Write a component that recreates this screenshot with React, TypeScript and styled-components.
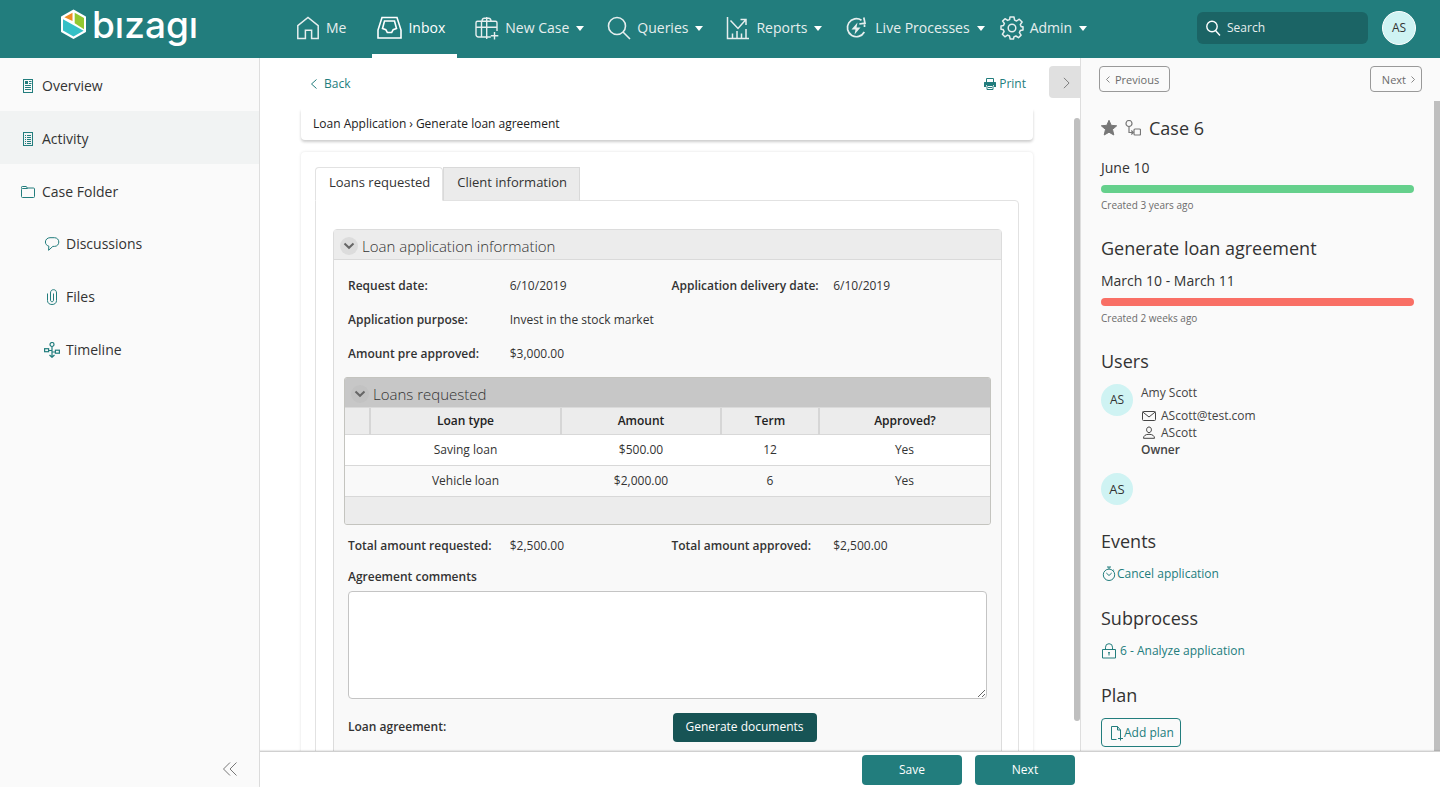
import React from "react";
import styled, { createGlobalStyle } from "styled-components";

const teal = "#227d7d";

const GlobalStyle = createGlobalStyle`
  *, *::before, *::after { box-sizing: border-box; }
  body { margin: 0; background: #fff; color: #333; font: 400 12px/18px "Open Sans", sans-serif; }
  button, input, textarea { font: inherit; }
  a { color: inherit; text-decoration: none; }
  svg { display: block; flex: none; }
  h1, h2, p, ul, dl, dd { margin: 0; padding: 0; }
`;

const Page = styled.div`
  display: flex;
  flex-direction: column;
  height: 100vh;
  overflow: hidden;
`;

/* ---------- header ---------- */

const Header = styled.header`
  display: flex;
  align-items: center;
  flex: none;
  height: 58px;
  padding-right: 24px;
  background: ${teal};
  color: #e6eeee;
`;

const Brand = styled.a`
  display: flex;
  align-items: center;
  gap: 5px;
  width: 291px;
  padding: 0 0 8px 60px;
  color: #fff;
`;

const Wordmark = styled.span`
  font: 500 37px/44px Inter, sans-serif;
`;

const Nav = styled.nav`
  display: flex;
  align-items: center;
  flex: 1;
  height: 100%;
`;

const NavItem = styled.a<{ $active?: boolean; $menu?: boolean; $after?: number }>`
  display: flex;
  align-items: center;
  gap: 6px;
  height: 100%;
  margin-right: ${(p) => p.$after ?? 11}px;
  padding: 2px ${(p) => (p.$menu ? 7 : 12)}px 0 5px;
  border-bottom: 4px solid ${(p) => (p.$active ? "#fff" : "transparent")};
  color: ${(p) => (p.$active ? "#fff" : "inherit")};
  font-size: 14px;
  line-height: 20px;
  white-space: nowrap;
`;

const Caret = styled.i`
  margin-left: 1px;
  border: 4px solid transparent;
  border-top: 5px solid #fff;
  border-bottom: 0;
`;

const HeaderTools = styled.div`
  display: flex;
  align-items: center;
  gap: 14px;
  padding-bottom: 3px;
`;

const SearchBox = styled.label`
  display: flex;
  align-items: center;
  gap: 6px;
  width: 171px;
  height: 32px;
  padding: 0 8px;
  border-radius: 6px;
  background: #1b6465;
  color: #fff;
`;

const SearchInput = styled.input`
  flex: 1;
  min-width: 0;
  padding: 0;
  border: 0;
  outline: 0;
  background: none;
  color: #fff;
  &::placeholder { color: #e6eeee; opacity: 1; }
`;

const Avatar = styled.span<{ $size: number; $ring?: boolean; $large?: boolean }>`
  display: flex;
  align-items: center;
  justify-content: center;
  flex: none;
  width: ${(p) => p.$size}px;
  height: ${(p) => p.$size}px;
  border: ${(p) => (p.$ring ? "1px solid #fff" : "0")};
  border-radius: 50%;
  background: #cff3f3;
  color: #333;
  font-size: ${(p) => (p.$large ? 13 : 12)}px;
`;

/* ---------- frame ---------- */

const Body = styled.div`
  display: flex;
  flex: 1;
  min-height: 0;
`;

const Sidebar = styled.aside`
  display: flex;
  flex-direction: column;
  justify-content: space-between;
  flex: none;
  width: 260px;
  border-right: 1px solid #dedede;
  background: #fafafa;
`;

const SideLink = styled.a<{ $active?: boolean; $nested?: boolean }>`
  display: flex;
  align-items: center;
  gap: 6px;
  height: 53px;
  padding: ${(p) => (p.$nested ? "0 0 0 44px" : "2px 0 0 20px")};
  background: ${(p) => (p.$active ? "#f1f3f3" : "none")};
  font-size: 14px;
  line-height: 20px;
  svg { color: ${teal}; }
`;

const CollapseButton = styled.button`
  align-self: flex-end;
  margin-right: 21px;
  padding: 10px 0;
  border: 0;
  background: none;
  color: #777;
`;

const Main = styled.div`
  display: flex;
  flex-direction: column;
  flex: 1;
  min-width: 0;
`;

const Columns = styled.div`
  display: flex;
  flex: 1;
  min-height: 0;
`;

const Footer = styled.footer`
  position: relative;
  display: flex;
  justify-content: flex-end;
  gap: 13px;
  flex: none;
  height: 36px;
  padding: 3px 365px 0 0;
  border-top: 1px solid #d0d0d0;
  box-shadow: 0 -1px 1px rgba(0, 0, 0, 0.08);
  background: #fff;
`;

const PrimaryButton = styled.button<{ $dark?: boolean }>`
  width: ${(p) => (p.$dark ? 144 : 100)}px;
  height: ${(p) => (p.$dark ? 29 : 30)}px;
  padding: 0;
  border: 0;
  border-radius: 4px;
  background: ${(p) => (p.$dark ? "#175455" : teal)};
  color: #fff;
  font-weight: 500;
`;

/* ---------- work area ---------- */

const Work = styled.main`
  display: flex;
  flex-direction: column;
  flex: 1;
  min-width: 0;
`;

const Toolbar = styled.div`
  display: flex;
  align-items: flex-start;
  flex: none;
  height: 51px;
  padding: 8px 0 0 50px;
`;

const ToolLink = styled.a`
  display: flex;
  align-items: center;
  gap: 3px;
  margin-top: 9px;
  color: ${teal};
  &:first-child { margin-right: auto; gap: 6px; }
`;

const PanelToggle = styled.button`
  display: flex;
  align-items: center;
  justify-content: center;
  width: 31px;
  height: 32px;
  margin-left: 23px;
  padding: 2px 0 0 3px;
  border: 0;
  border-radius: 4px 0 0 4px;
  background: #e0e0e0;
  color: #777;
`;

const Scroller = styled.div`
  display: flex;
  flex: 1;
  min-height: 0;
  overflow: hidden;
`;

const WorkContent = styled.div`
  flex: 1;
  min-width: 0;
  padding: 0 41px;
`;

const WorkThumb = styled.div`
  flex: none;
  width: 6px;
  margin: 9px 0 30px;
  border-radius: 3px;
  background: #bfbfbf;
`;

const Crumbs = styled.div`
  display: flex;
  align-items: center;
  gap: 3px;
  height: 31px;
  margin-bottom: 12px;
  padding: 0 12px 1px;
  border-radius: 0 0 4px 4px;
  box-shadow: 0 2px 3px rgba(0, 0, 0, 0.2);
  background: #fff;
  color: #222;
`;

const Card = styled.div`
  padding: 15px 14px;
  border-radius: 4px;
  box-shadow: 0 0 3px rgba(0, 0, 0, 0.12);
  background: #fff;
`;

const Tabs = styled.div`
  display: flex;
`;

const Tab = styled.button<{ $active?: boolean }>`
  position: relative;
  height: 34px;
  margin-bottom: -1px;
  padding: 0 12px 4px 13px;
  border: 1px solid ${(p) => (p.$active ? "#e2e2e2" : "#d9d9d9")};
  border-bottom-color: ${(p) => (p.$active ? "#fff" : "#e2e2e2")};
  border-radius: ${(p) => (p.$active ? "4px 4px 0 0" : "0")};
  background: ${(p) => (p.$active ? "#fff" : "#ebebeb")};
  color: #333;
  font-size: 13px;
`;

const TabPanel = styled.div`
  padding: 28px 16px 16px 17px;
  border: 1px solid #e2e2e2;
  border-radius: 0 4px 4px 4px;
`;

const Section = styled.section`
  padding-bottom: 80px;
  border: 1px solid #dcdcdc;
  border-radius: 4px 4px 0 0;
  background: #f9f9f9;
`;

const SectionTitle = styled.h2<{ $dark?: boolean }>`
  display: flex;
  align-items: center;
  gap: 4px;
  height: 30px;
  padding: ${(p) => (p.$dark ? "2px 6px 0" : "2px 6px 0")};
  border-bottom: 1px solid #dadada;
  background: ${(p) => (p.$dark ? "#c7c7c7" : "#ececec")};
  color: #333;
  font-size: 15px;
  font-weight: 300;
  line-height: 20px;
`;

const Disclosure = styled.button<{ $dark?: boolean }>`
  display: flex;
  align-items: center;
  justify-content: center;
  width: 18px;
  height: 18px;
  padding: 0;
  border: 0;
  border-radius: 50%;
  background: ${(p) => (p.$dark ? "#c2c2c2" : "#dcdcdc")};
  color: #666;
`;

const Fields = styled.dl`
  display: grid;
  grid-template-columns: 1fr 1fr;
  grid-auto-rows: 34px;
  align-items: center;
  margin: 0 6px 0 14px;
`;

const FieldsTop = styled(Fields)`
  margin-top: 9px;
  margin-bottom: 6px;
`;

const Field = styled.div<{ $start?: boolean }>`
  display: grid;
  grid-template-columns: 1fr 1fr;
  align-items: center;
  grid-column-start: ${(p) => (p.$start ? 1 : "auto")};
`;

const Term = styled.dt`
  font-weight: 600;
  white-space: nowrap;
`;

const Grid = styled.div`
  margin: 0 10px 4px;
  border: 1px solid #c4c4bf;
  border-radius: 3px;
  overflow: hidden;
  background: #ececec;
`;

const Table = styled.table`
  width: 100%;
  table-layout: fixed;
  border-collapse: collapse;
  text-align: center;
  th { height: 26px; padding: 1px 0 0; border-left: 2px solid #d6d6d6; color: #222; font-weight: 600; }
  th:first-child { border-left: 0; }
  td { height: 31px; padding: 0; border-top: 1px solid #d8d8d8; background: #fff; }
  tr:nth-child(even) td { background: #f9f9f9; }
  tfoot td { height: 28px; background: #ececec; }
`;

const CommentLabel = styled.label`
  display: block;
  margin: 5px 14px;
  font-weight: 600;
`;

const Comments = styled.textarea`
  display: block;
  width: calc(100% - 28px);
  height: 108px;
  margin: 0 14px 11px;
  border: 1px solid #c4c4c4;
  border-radius: 4px;
  background: #fff;
`;

const AgreementRow = styled.div`
  display: grid;
  grid-template-columns: 1fr 1fr;
  align-items: center;
  height: 34px;
  margin: 0 4px 0 14px;
  font-weight: 600;
`;

/* ---------- case panel ---------- */

const CasePanel = styled.aside`
  display: flex;
  flex-direction: column;
  flex: none;
  width: 360px;
  border-left: 1px solid #dedede;
  background: #fafafa;
`;

const Pager = styled.div`
  display: flex;
  justify-content: space-between;
  flex: none;
  height: 43px;
  padding: 8px 18px 0;
`;

const PagerButton = styled.button`
  display: flex;
  align-items: center;
  gap: 5px;
  height: 26px;
  padding: 1px 10px 0 6px;
  border: 1px solid #999;
  border-radius: 4px;
  background: none;
  color: #6b6b6b;
  font-size: 11px;
  &:last-child { padding: 1px 6px 0 11px; }
`;

const CaseContent = styled.div`
  flex: 1;
  min-width: 0;
  padding: 15px 20px 0;
`;

const CaseThumb = styled.div`
  flex: none;
  width: 6px;
  background: #bfbfbf;
`;

const CaseTitle = styled.h1`
  display: flex;
  align-items: center;
  gap: 8px;
  margin-bottom: 18px;
  color: #333;
  font-size: 18px;
  font-weight: 400;
  line-height: 24px;
  svg { color: #777; }
`;

const Heading = styled.h2`
  margin-bottom: 11px;
  color: #333;
  font-size: 18px;
  font-weight: 400;
  line-height: 24px;
`;

const DateLine = styled.p`
  margin-bottom: 7px;
  font-size: 14px;
  line-height: 20px;
`;

const Bar = styled.div<{ $late?: boolean }>`
  height: 8px;
  margin-bottom: 5px;
  border-radius: 4px;
  background: ${(p) => (p.$late ? "#f96f65" : "#65d08c")};
`;

const Created = styled.p`
  margin-bottom: 24px;
  color: #6b6b6b;
  font-size: 10px;
  line-height: 14px;
`;

const User = styled.div`
  display: flex;
  gap: 8px;
  height: 89px;
`;

const UserInfo = styled.div`
  color: #444;
  line-height: 17px;
  p:first-child { margin-bottom: 6px; }
`;

const Role = styled.strong`
  font-weight: 600;
`;

const IconLine = styled.p`
  display: flex;
  align-items: center;
  gap: 4px;
`;

const CaseLink = styled.a<{ $gap?: number }>`
  display: flex;
  align-items: center;
  gap: ${(p) => p.$gap ?? 0}px;
  height: 20px;
  margin-bottom: 22px;
  color: ${teal};
`;

const Events = styled.div`
  margin-top: 24px;
`;

const PlanButton = styled.button`
  display: flex;
  align-items: center;
  height: 29px;
  padding: 0 6px;
  border: 1px solid ${teal};
  border-radius: 4px;
  background: none;
  color: ${teal};
`;

/* ---------- icons ---------- */

type IconProps = { w: number; h?: number; sw?: number; box?: string; children: React.ReactNode };

const Icon = ({ w, h = w, sw = 1, box, children }: IconProps) => (
  <svg width={w} height={h} viewBox={box ?? `0 0 ${w} ${h}`} fill="none" stroke="currentColor" strokeWidth={sw} aria-hidden="true">
    {children}
  </svg>
);

const LogoMark = () => (
  <svg width="27" height="32" viewBox="0 0 27 32" aria-hidden="true">
    <path d="M13.5 1.5 25 8v14.5l-11.5 6.5L2 22.5V8z" fill="#fff" stroke="#fff" strokeWidth="2" strokeLinejoin="round" />
    <path d="M12.5 3.8V12L4.4 8.3z" fill="#ef8c22" />
    <path d="M14.7 3.8 24 9v11.3l-9.3-6z" fill="#93c82f" />
    <path d="M3 10.2 23.6 21.8l-10.1 5.6L3 21.6z" fill="#34c0c6" />
  </svg>
);

const Home = () => (
  <Icon w={24} sw={1.5}><path d="M1.8 9.6 12 1.5l10.2 8.1V22.5h-6.6v-8.2H9.4v8.2H1.8z" /></Icon>
);
const Inbox = () => (
  <Icon w={25} h={24} sw={1.6}>
    <path d="M5 1.500h15l4 12.500v8H1v-8z" />
    <path d="M5.500 12.500 7.500 5h10l2 7.500-3.300 1.200-1.500 2.800H10.300l-1.500-2.800z" />
  </Icon>
);
const NewCase = () => (
  <Icon w={24} sw={1.4}>
    <path d="M15.8 21H3.4A2.4 2.4 0 0 1 1 18.6V6.8a1.5 1.5 0 0 1 1.500-1.500h18A1.500 1.500 0 0 1 22 6.800V15" />
    <path d="M7 5.300C7 3 8 2.200 9.400 2.200h4.200C15 2.200 16 3 16 5.300M1 11.200h21M6.500 5.300v15.700M11.700 1v22M19.500 16v7.500M15.800 19.700h7.500" />
  </Icon>
);
const Lens = () => (
  <Icon w={24} sw={1.6}><circle cx="10" cy="10" r="8.500" /><path d="m16 16 7 7" /></Icon>
);
const Reports = () => (
  <Icon w={24} sw={1.5}>
    <path d="M1.500 1v21.500H23M4.500 4.500l7.500 8 7.500-8.500M14.500 3.500h5.500V9" />
    <path d="M6.500 22v-4.500M11 22v-7M15.500 22v-4.500M20 22v-9" />
  </Icon>
);
const Live = () => (
  <Icon w={24} sw={1.7}>
    <path d="M16.500 4.300A9 9 0 1 0 19.300 16" />
    <path d="M19.500 11V8.500M18.800 1.500 20 7.200l-5.700.8" />
    <path d="m12.500 6.500-6 7h4l-1 5 6-7h-4z" fill="currentColor" stroke="none" />
  </Icon>
);
const Gear = () => (
  <Icon w={24} sw={1.5}>
    <circle cx="12" cy="12" r="3.8" />
    <path strokeLinejoin="round" d="M10 1h4l.6 3.100 2 .9 2.700-1.800 2.800 2.800-1.800 2.700.9 2L23 10.800v3.200l-2.700.6-.9 2 1.700 2.500-2.600 2.600-2.600-1.700-2 .9L13.500 23h-3.300l-.7-3-2-.9-2.600 1.700-2.500-2.600 1.700-2.600-.9-2L1 13.200V10l2.500-.5.9-2L2.600 5.100 5 2.700 7.600 4.400l2-.8z" />
  </Icon>
);
const SmallLens = () => (
  <Icon w={16} sw={1.4}><circle cx="7" cy="6.500" r="5.200" /><path d="m10.500 10.500 4.500 5" /></Icon>
);
const Overview = () => (
  <Icon w={16}>
    <rect x="3.500" y="1.500" width="9" height="13" />
    <path d="M9 3.500h2.500M9 5.500h2.500M5 7.500h6M5 9.500h6M5 11.500h6" />
    <path d="M5 3h3v3H5z" fill="currentColor" stroke="none" />
  </Icon>
);
const Activity = () => (
  <Icon w={16}>
    <rect x="3.500" y="1.500" width="9" height="13" />
    <path d="M5 4.500h1M7 4.500h4M5 6.500h1M7 6.500h4M5 8.500h1M7 8.500h4M5 10.500h1M7 10.500h4M5 12.500h1M7 12.500h4" />
  </Icon>
);
const Folder = () => (
  <Icon w={16}><path d="M1.500 4.500V3.300q0-.8.800-.8h4l1 1.500h6.200q1 0 1 1v7.500q0 1-1 1h-11q-1 0-1-1v-7q0-1 1-1h5.200" /></Icon>
);
const Bubble = () => (
  <Icon w={16}><path d="M6 1.700h4.500c2.600 0 4.300 2 4.300 4.300s-1.700 4.400-4.300 4.400H8.800L4.600 14.300l.2-4.200C2.600 9.500 1.400 8 1.400 6c0-2.300 2-4.300 4.600-4.300z" /></Icon>
);
const Clip = () => (
  <Icon w={16}><path d="M3.500 4.500v7c0 2.500 1.800 4 4.500 4s4.500-1.500 4.500-4V4c0-2-1-3.300-3-3.300S6.500 2 6.500 4v7c0 1 .5 1.700 1.500 1.700s1.500-.7 1.500-1.700V4.500" /></Icon>
);
const Timeline = () => (
  <Icon w={16} sw={1.2}>
    <circle cx="8" cy="2.500" r="2" /><path d="M8 4.500V15M4.500 8.500H8M8 10h3M5.500 13 8 15.300l2.500-2.300" />
    <rect x=".6" y="6.700" width="4" height="3" /><rect x="11.400" y="8.200" width="4" height="3" />
  </Icon>
);
const ChevLeft = () => <Icon w={8} h={12}><path d="M6.500 1.500 1.500 6l5 4.500" /></Icon>;
const ChevRight = ({ small }: { small?: boolean }) => (
  <Icon w={small ? 4 : 7} h={small ? 7 : 12} box="0 0 8 14" sw={small ? 1.6 : 1.1}><path d="m1 1 6 6-6 6" /></Icon>
);
const SmallLeft = () => <Icon w={4} h={7} box="0 0 8 14" sw={1.6}><path d="M7 1 1 7l6 6" /></Icon>;
const DoubleLeft = () => <Icon w={16}><path d="M8 1.500 1.500 8 8 14.500M14.500 1.500 8 8l6.500 6.500" /></Icon>;
const DownMark = () => <Icon w={12} h={8} sw={2}><path d="M1.500 1.500 6 5.800l4.500-4.300" /></Icon>;
const Printer = () => (
  <Icon w={12}>
    <path d="M2.500 4V.5h7V4M3 7.500h6v4H3z" />
    <path d="M0 4.500Q0 4 .5 4h11q.5 0 .5.500V9h-2V7H2v2H0z" fill="currentColor" stroke="none" />
    <path d="M4 9.500h4" />
  </Icon>
);
const Star = () => (
  <Icon w={16}><path d="m8 .3 2.200 5 5.500.5-4.200 3.600 1.300 5.600L8 12.200 3.200 15l1.300-5.600L.3 5.800l5.500-.5z" fill="currentColor" stroke="#777" /></Icon>
);
const Flow = () => (
  <Icon w={16} sw={1.2}><circle cx="4" cy="3.500" r="3" /><path d="M4 6.500v6h4M6.300 10.500l2 2-2 2" /><rect x="9" y="9" width="6.500" height="6" rx="1" /></Icon>
);
const Mail = () => <Icon w={16}><rect x="1.500" y="3.500" width="13" height="9" rx="1" /><path d="m1.800 4 6.200 5 6.200-5" /></Icon>;
const Person = () => (
  <Icon w={16}><path d="M8 2c1.600 0 2.400 1.200 2.400 2.800S9.400 7.600 8 7.600 5.600 6.400 5.600 4.800 6.400 2 8 2z" /><path d="M2.500 13.300c0-2.500 2-4 5.500-4s5.500 1.500 5.500 4z" /></Icon>
);
const Timer = () => (
  <Icon w={16}><circle cx="8" cy="8.800" r="5.700" /><path d="M6 1h4M8 1v2M5.300 7 8 9.500 10.700 7M12.200 3.800l1 .8" /></Icon>
);
const Lock = () => (
  <Icon w={16}><path d="M1.500 6.500h13v8.500h-13zM4.500 6.500V4.200a3.500 3.500 0 0 1 7 0v2.300M8 9.500v3M7 9.700h2" /></Icon>
);
const AddDoc = () => (
  <Icon w={16}><path d="M8.500 14.500h-5v-13h6l3 3.500v6M9.500 1.500V5h3M12.500 11v4.500M10 13.500h5" /></Icon>
);

/* ---------- data ---------- */

const navItems = [
  { label: "Me", icon: <Home />, after: 14 },
  { label: "Inbox", icon: <Inbox />, active: true, after: 13 },
  { label: "New Case", icon: <NewCase />, menu: true },
  { label: "Queries", icon: <Lens />, menu: true },
  { label: "Reports", icon: <Reports />, menu: true },
  { label: "Live Processes", icon: <Live />, menu: true, after: 3 },
  { label: "Admin", icon: <Gear />, menu: true },
];

const sideItems = [
  { label: "Overview", icon: <Overview /> },
  { label: "Activity", icon: <Activity />, active: true },
  { label: "Case Folder", icon: <Folder /> },
  { label: "Discussions", icon: <Bubble />, nested: true },
  { label: "Files", icon: <Clip />, nested: true },
  { label: "Timeline", icon: <Timeline />, nested: true },
];

const loans = [
  ["Saving loan", "$500.00", "12", "Yes"],
  ["Vehicle loan", "$2,000.00", "6", "Yes"],
];

export default function App() {
  return (
    <Page>
      <GlobalStyle />
      <Header>
        <Brand href="#" aria-label="bizagi">
          <LogoMark />
          <Wordmark>bızagı</Wordmark>
        </Brand>
        <Nav>
          {navItems.map((n) => (
            <NavItem key={n.label} href="#" $active={n.active} $menu={n.menu} $after={n.after}>
              {n.icon}
              {n.label}
              {n.menu && <Caret />}
            </NavItem>
          ))}
        </Nav>
        <HeaderTools>
          <SearchBox>
            <SmallLens />
            <SearchInput type="text" placeholder="Search" aria-label="Search" />
          </SearchBox>
          <Avatar $size={34} $ring>AS</Avatar>
        </HeaderTools>
      </Header>

      <Body>
        <Sidebar>
          <nav>
            {sideItems.map((s) => (
              <SideLink key={s.label} href="#" $active={s.active} $nested={s.nested}>
                {s.icon}
                {s.label}
              </SideLink>
            ))}
          </nav>
          <CollapseButton type="button" aria-label="Collapse menu"><DoubleLeft /></CollapseButton>
        </Sidebar>

        <Main>
          <Columns>
            <Work>
              <Toolbar>
                <ToolLink href="#"><ChevLeft />Back</ToolLink>
                <ToolLink href="#"><Printer />Print</ToolLink>
                <PanelToggle type="button" aria-label="Hide case panel"><ChevRight /></PanelToggle>
              </Toolbar>
              <Scroller>
                <WorkContent>
                  <Crumbs>
                    <span>Loan Application</span>
                    <span>›</span>
                    <span>Generate loan agreement</span>
                  </Crumbs>
                  <Card>
                    <Tabs>
                      <Tab type="button" $active>Loans requested</Tab>
                      <Tab type="button">Client information</Tab>
                    </Tabs>
                    <TabPanel>
                      <Section>
                        <SectionTitle>
                          <Disclosure type="button" aria-label="Collapse loan application information"><DownMark /></Disclosure>
                          Loan application information
                        </SectionTitle>
                        <FieldsTop>
                          <Field><Term>Request date:</Term><dd>6/10/2019</dd></Field>
                          <Field><Term>Application delivery date:</Term><dd>6/10/2019</dd></Field>
                          <Field $start><Term>Application purpose:</Term><dd>Invest in the stock market</dd></Field>
                          <Field $start><Term>Amount pre approved:</Term><dd>$3,000.00</dd></Field>
                        </FieldsTop>
                        <Grid>
                          <SectionTitle $dark>
                            <Disclosure type="button" $dark aria-label="Collapse loans requested"><DownMark /></Disclosure>
                            Loans requested
                          </SectionTitle>
                          <Table>
                            <colgroup>
                              <col width="25" /><col width="191" /><col width="160" /><col width="98" /><col width="171" />
                            </colgroup>
                            <thead>
                              <tr><th /><th>Loan type</th><th>Amount</th><th>Term</th><th>Approved?</th></tr>
                            </thead>
                            <tbody>
                              {loans.map((row) => (
                                <tr key={row[0]}>
                                  <td />
                                  {row.map((cell) => <td key={cell}>{cell}</td>)}
                                </tr>
                              ))}
                            </tbody>
                            <tfoot><tr><td colSpan={5} /></tr></tfoot>
                          </Table>
                        </Grid>
                        <Fields>
                          <Field><Term>Total amount requested:</Term><dd>$2,500.00</dd></Field>
                          <Field><Term>Total amount approved:</Term><dd>$2,500.00</dd></Field>
                        </Fields>
                        <CommentLabel htmlFor="comments">Agreement comments</CommentLabel>
                        <Comments id="comments" />
                        <AgreementRow>
                          <span>Loan agreement:</span>
                          <PrimaryButton type="button" $dark>Generate documents</PrimaryButton>
                        </AgreementRow>
                      </Section>
                    </TabPanel>
                  </Card>
                </WorkContent>
                <WorkThumb />
              </Scroller>
            </Work>

            <CasePanel>
              <Pager>
                <PagerButton type="button"><SmallLeft />Previous</PagerButton>
                <PagerButton type="button">Next<ChevRight small /></PagerButton>
              </Pager>
              <Scroller>
                <CaseContent>
                  <CaseTitle><Star /><Flow />Case 6</CaseTitle>
                  <DateLine>June 10</DateLine>
                  <Bar />
                  <Created>Created 3 years ago</Created>
                  <Heading>Generate loan agreement</Heading>
                  <DateLine>March 10 - March 11</DateLine>
                  <Bar $late />
                  <Created>Created 2 weeks ago</Created>
                  <Heading>Users</Heading>
                  <User>
                    <Avatar $size={32}>AS</Avatar>
                    <UserInfo>
                      <p>Amy Scott</p>
                      <IconLine><Mail />AScott@test.com</IconLine>
                      <IconLine><Person />AScott</IconLine>
                      <Role>Owner</Role>
                    </UserInfo>
                  </User>
                  <Avatar $size={32} $large>AS</Avatar>
                  <Events>
                    <Heading>Events</Heading>
                    <CaseLink href="#"><Timer />Cancel application</CaseLink>
                  </Events>
                  <Heading>Subprocess</Heading>
                  <CaseLink href="#" $gap={3}><Lock />6 - Analyze application</CaseLink>
                  <Heading>Plan</Heading>
                  <PlanButton type="button"><AddDoc />Add plan</PlanButton>
                </CaseContent>
                <CaseThumb />
              </Scroller>
            </CasePanel>
          </Columns>
          <Footer>
            <PrimaryButton type="button">Save</PrimaryButton>
            <PrimaryButton type="button">Next</PrimaryButton>
          </Footer>
        </Main>
      </Body>
    </Page>
  );
}
